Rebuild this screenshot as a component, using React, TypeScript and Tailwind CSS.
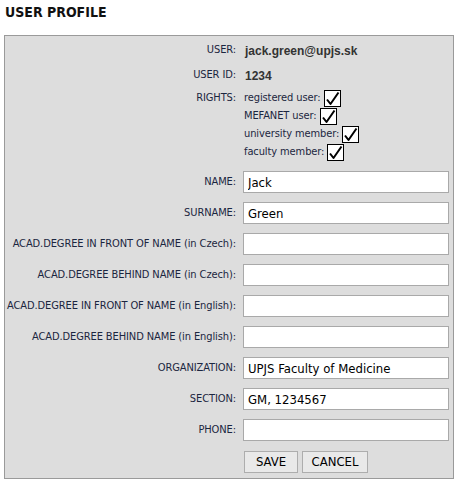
const labelFont = "font-['DejaVu_Sans_Condensed','DejaVu_Sans',sans-serif]";

const CheckBox = () => (
  <svg width="17" height="17" viewBox="0 0 17 17" className="shrink-0">
    <rect x="0.5" y="0.5" width="16" height="16" fill="#ffffff" stroke="#000000" />
    <path d="M3 9.5 L6.5 14 L14.5 2.5" fill="none" stroke="#000000" strokeWidth="2" strokeLinejoin="round" />
  </svg>
);

const fields = [
  { label: 'NAME:', value: 'Jack' },
  { label: 'SURNAME:', value: 'Green' },
  { label: 'ACAD.DEGREE IN FRONT OF NAME (in Czech):', value: '' },
  { label: 'ACAD.DEGREE BEHIND NAME (in Czech):', value: '' },
  { label: 'ACAD.DEGREE IN FRONT OF NAME (in English):', value: '' },
  { label: 'ACAD.DEGREE BEHIND NAME (in English):', value: '' },
  { label: 'ORGANIZATION:', value: 'UPJS Faculty of Medicine' },
  { label: 'SECTION:', value: 'GM, 1234567' },
  { label: 'PHONE:', value: '' },
];

const rights = ['registered user:', 'MEFANET user:', 'university member:', 'faculty member:'];

export default function App() {
  return (
    <div className={`w-[461px] h-[486px] bg-white ${labelFont}`}>
      {/* Title */}
      <h1 className="pl-[5px] pt-[4px] h-[35px] text-[14px] font-bold text-[#111111] leading-[16px]">USER PROFILE</h1>

      {/* Panel */}
      <div className="ml-[4px] w-[450px] h-[444px] border border-[#9a9a9a] bg-[#dddddd] pt-[2px] text-[11px] text-[#1b2640] tracking-[-0.1px]">
        <div className="flex items-center h-[25px]">
          <div className="w-[231px] text-right">USER:</div>
          <div className="ml-[9px] font-['Liberation_Sans',Arial,sans-serif] font-bold text-[12px] text-[#333333] tracking-normal">jack.green@upjs.sk</div>
        </div>
        <div className="flex items-center h-[25px]">
          <div className="w-[231px] text-right">USER ID:</div>
          <div className="ml-[9px] font-['Liberation_Sans',Arial,sans-serif] font-bold text-[12px] text-[#333333] tracking-normal">1234</div>
        </div>
        <div className="flex mt-[1px]">
          <div className="w-[231px] text-right h-[18px] leading-[18px]">RIGHTS:</div>
          <div className="ml-[8px] flex flex-col">
            {rights.map((r) => (
              <div key={r} className="flex items-center h-[18px] gap-[3px]">
                <span>{r}</span>
                <CheckBox />
              </div>
            ))}
          </div>
        </div>

        {/* Editable fields */}
        <div className="mt-[10px] flex flex-col gap-[9px]">
          {fields.map((f) => (
            <div key={f.label} className="flex items-center h-[22px]">
              <label className="w-[231px] text-right whitespace-nowrap">{f.label}</label>
              <input
                defaultValue={f.value}
                className="ml-[7px] w-[206px] h-[22px] border border-[#a9a9a9] bg-white px-[4px] text-[13px] text-black tracking-normal outline-none"
              />
            </div>
          ))}
        </div>

        {/* Buttons */}
        <div className="mt-[10px] ml-[239px] flex gap-[4px]">
          <button className="w-[54px] h-[22px] border border-[#adadad] bg-[#e9e9e9] text-[13px] text-black tracking-normal">SAVE</button>
          <button className="w-[66px] h-[22px] border border-[#adadad] bg-[#e9e9e9] text-[13px] text-black tracking-normal">CANCEL</button>
        </div>
      </div>
    </div>
  );
}
